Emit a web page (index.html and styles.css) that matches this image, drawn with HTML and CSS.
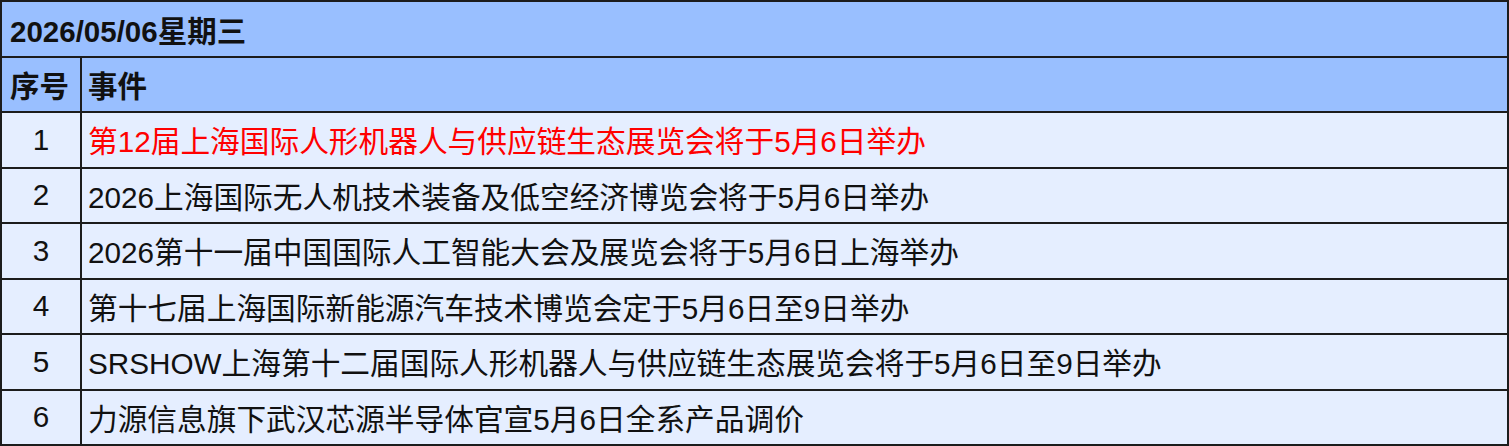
FILE: index.html
```html
<!DOCTYPE html>
<html lang="zh">
<head>
<meta charset="utf-8">
<link rel="stylesheet" href="styles.css">
</head>
<body>
<div class="sheet">
  <div class="cell title">2026/05/06星期三</div>
  <div class="cell head num">序号</div>
  <div class="cell head">事件</div>

  <div class="cell idx">1</div>
  <div class="cell ev red">第12届上海国际人形机器人与供应链生态展览会将于5月6日举办</div>

  <div class="cell idx">2</div>
  <div class="cell ev">2026上海国际无人机技术装备及低空经济博览会将于5月6日举办</div>

  <div class="cell idx">3</div>
  <div class="cell ev">2026第十一届中国国际人工智能大会及展览会将于5月6日上海举办</div>

  <div class="cell idx">4</div>
  <div class="cell ev">第十七届上海国际新能源汽车技术博览会定于5月6日至9日举办</div>

  <div class="cell idx">5</div>
  <div class="cell ev">SRSHOW上海第十二届国际人形机器人与供应链生态展览会将于5月6日至9日举办</div>

  <div class="cell idx">6</div>
  <div class="cell ev">力源信息旗下武汉芯源半导体官宣5月6日全系产品调价</div>
</div>
</body>
</html>
```

FILE: styles.css
```css
html, body {
  margin: 0;
  padding: 0;
  background: #ffffff;
}

.sheet {
  width: 1509px;
  height: 446px;
  box-sizing: border-box;
  display: grid;
  grid-template-columns: 80px 1fr;
  grid-template-rows: repeat(8, 1fr);
  border-top: 2px solid #1c1c1c;
  border-left: 2px solid #1c1c1c;
  font-family: "Liberation Sans", "Noto Sans CJK SC", sans-serif;
  color: #111111;
}

.cell {
  box-sizing: border-box;
  border-right: 2px solid #1c1c1c;
  border-bottom: 2px solid #1c1c1c;
  display: flex;
  align-items: center;
  background: #e5eeff;
  font-size: 29.7px;
  white-space: nowrap;
  overflow: hidden;
}

.title {
  grid-column: 1 / 3;
  background: #99bfff;
  font-weight: bold;
  font-size: 29.5px;
  padding-left: 8px;
}

.head {
  background: #99bfff;
  font-weight: bold;
  font-size: 29.5px;
  padding-left: 6px;
}

.head.num {
  padding-left: 8px;
}

.idx {
  justify-content: center;
}

.ev {
  padding-left: 6px;
}

.red {
  color: #ff0000;
}
```
